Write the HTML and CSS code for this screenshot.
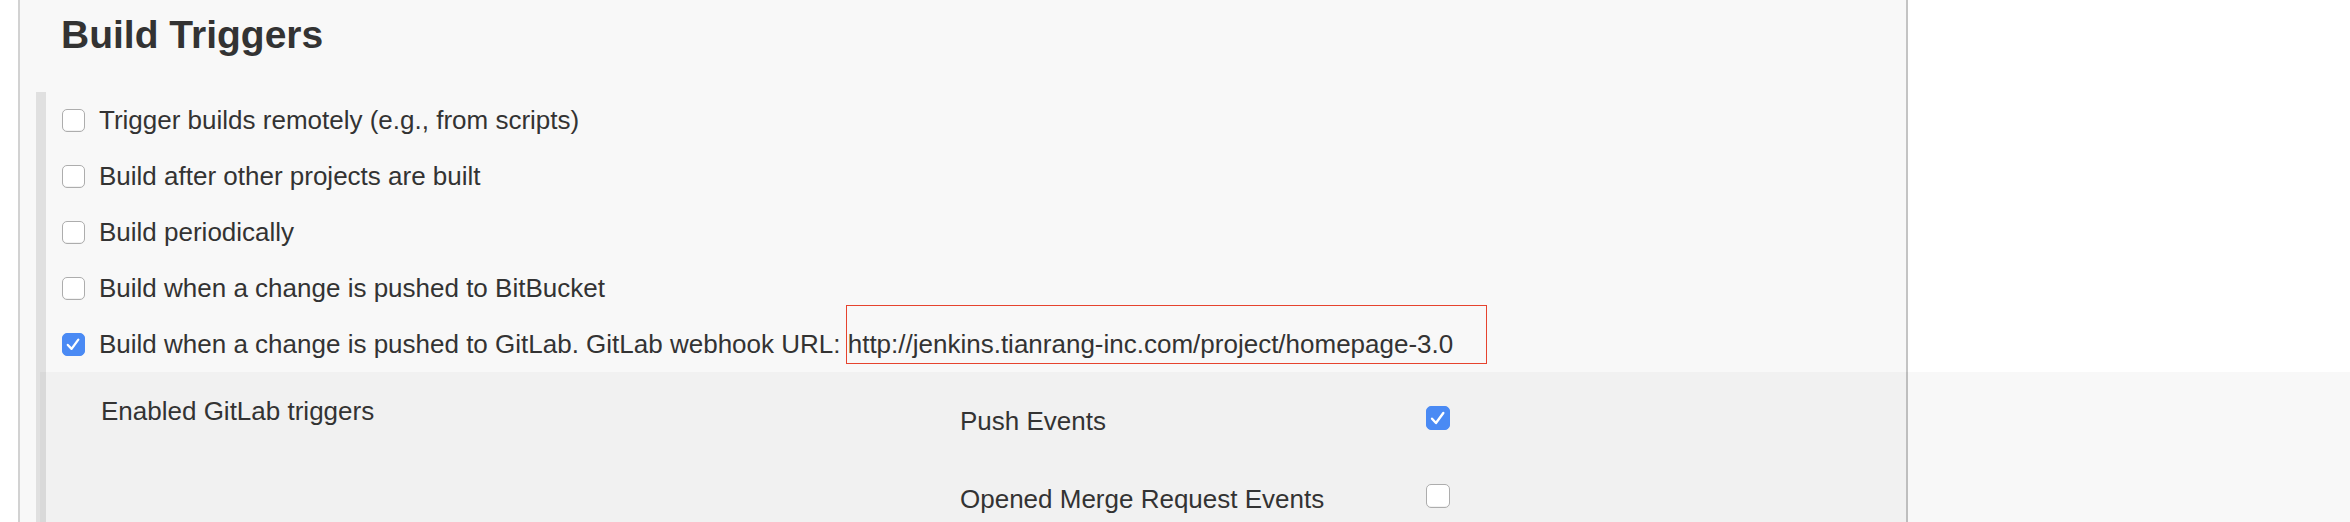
FILE: index.html
```html
<!DOCTYPE html>
<html lang="en">
<head>
<meta charset="utf-8">
<title>Build Triggers</title>
<link rel="stylesheet" href="styles.css">
</head>
<body>
<div class="panel">
  <h2 class="title">Build Triggers</h2>
  <div class="section">
    <div class="row"><span class="cb"></span><span class="label">Trigger builds remotely (e.g., from scripts)</span></div>
    <div class="row"><span class="cb"></span><span class="label">Build after other projects are built</span></div>
    <div class="row"><span class="cb"></span><span class="label">Build periodically</span></div>
    <div class="row"><span class="cb"></span><span class="label">Build when a change is pushed to BitBucket</span></div>
    <div class="row"><span class="cb checked"><svg viewBox="0 0 24 24"><path d="M5.5 12.5 L9.8 17 L17.5 6.5"/></svg></span><span class="label">Build when a change is pushed to GitLab. GitLab webhook URL: <span class="url">http://jenkins.tianrang-inc.com/project/homepage-3.0</span></span></div>
    <div class="sub">
      <div class="sub-label">Enabled GitLab triggers</div>
      <div class="opts">
        <div class="opt"><span class="opt-label">Push Events</span><span class="cb lg checked"><svg viewBox="0 0 24 24"><path d="M5.5 12.8 L9.8 17.5 L17.8 6.5"/></svg></span></div>
        <div class="opt"><span class="opt-label">Opened Merge Request Events</span><span class="cb lg"></span></div>
      </div>
    </div>
  </div>
</div>
</body>
</html>
```

FILE: styles.css
```css
html, body {
  margin: 0;
  padding: 0;
  overflow: hidden;
  background: #ffffff;
}

body {
  font-family: "Liberation Sans", Arial, Helvetica, sans-serif;
  color: #333333;
  font-size: 26px;
  line-height: 30px;
}

.panel {
  margin-left: 18px;
  width: 1886px;
  min-height: 100vh;
  background: #f8f8f8;
  border-left: 2px solid #d2d2d2;
  border-right: 2px solid #c4c4c4;
}

.title {
  margin: 0;
  padding: 12px 0 0 41px;
  font-size: 39px;
  line-height: 45px;
  font-weight: bold;
  color: #333333;
}

.section {
  margin: 35px 0 0 16px;
  border-left: 10px solid #e0e0e0;
  padding-left: 16px;
}

.row {
  height: 56px;
  display: flex;
  align-items: center;
  gap: 14px;
}

.label {
  white-space: nowrap;
}

.cb {
  box-sizing: border-box;
  width: 23px;
  height: 23px;
  flex: none;
  border: 1.5px solid #adadad;
  border-radius: 5px;
  background: #ffffff;
  display: inline-flex;
  align-items: center;
  justify-content: center;
  box-shadow: inset 0 -1px 0 rgba(0, 0, 0, 0.05);
}

.cb.lg {
  width: 24px;
  height: 24px;
}

.cb.checked {
  background: #4a8af4;
  border-color: #4a8af4;
  box-shadow: none;
}

.cb svg {
  width: 100%;
  height: 100%;
  fill: none;
  stroke: #ffffff;
  stroke-width: 2.6;
  stroke-linecap: round;
  stroke-linejoin: round;
}

.url {
  position: relative;
}

.url::after {
  content: "";
  position: absolute;
  left: -2px;
  top: -24.5px;
  width: 641px;
  height: 59px;
  box-sizing: border-box;
  border: 1px solid #e6432e;
  pointer-events: none;
}

.sub {
  margin-left: -22px;
  width: 2310px;
  box-sizing: border-box;
  background: rgba(0, 0, 0, 0.027);
  padding: 10px 0 0 61px;
  display: grid;
  grid-template-columns: 859px 1fr;
  min-height: 400px;
}

.sub-label {
  padding-top: 14px;
  white-space: nowrap;
}

.opts {
  display: flex;
  flex-direction: column;
}

.opt {
  height: 78px;
  display: grid;
  grid-template-columns: 466px 24px;
  align-items: start;
}

.opt-label {
  padding-top: 24px;
  white-space: nowrap;
}

.opt .cb {
  margin-top: 24px;
}
```
